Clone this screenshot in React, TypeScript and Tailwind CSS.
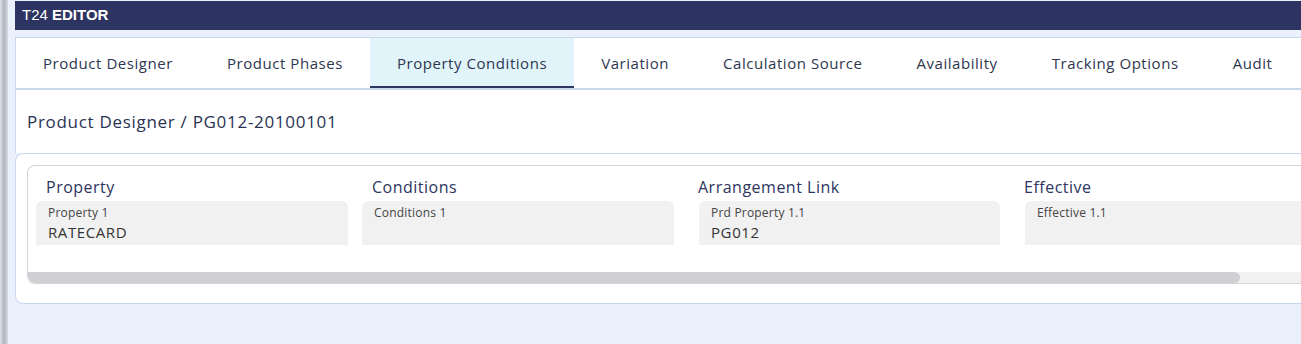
import React from 'react';

const tabs = [
  'Product Designer',
  'Product Phases',
  'Property Conditions',
  'Variation',
  'Calculation Source',
  'Availability',
  'Tracking Options',
  'Audit',
];

const columns = [
  { label: 'Property', caption: 'Property 1', value: 'RATECARD', field: 'ml-0 w-[312px]' },
  { label: 'Conditions', caption: 'Conditions 1', value: '', field: 'ml-0 w-[312px]' },
  { label: 'Arrangement Link', caption: 'Prd Property 1.1', value: 'PG012', field: 'ml-[11px] w-[301px]' },
  { label: 'Effective', caption: 'Effective 1.1', value: '', field: 'ml-[11px] w-[312px]' },
];

export default function App() {
  return (
    <div className="flex h-[344px] w-[1301px] overflow-hidden bg-[#eaf1fd] font-['Open_Sans',sans-serif]">
      <div className="w-[8px] shrink-0 bg-gradient-to-r from-[#e1e5eb] via-[#aeb4be] to-[#d6dce6]" />
      <div className="flex-1 min-w-0 pl-[7px] pt-px">
        <div className="h-[29px] bg-[#2d3461] pl-[7px] flex items-center text-[15px] text-white font-['Liberation_Sans',Arial,sans-serif]">
          <span>T24&nbsp;</span>
          <span className="font-bold">EDITOR</span>
        </div>

        <div className="mt-[7px] bg-white border border-r-0 border-b-2 border-[#c9d7ee] flex overflow-hidden">
          {tabs.map((t, i) => (
            <div
              key={t}
              className={
                'h-[50px] shrink-0 whitespace-nowrap px-[27px] pt-[2px] flex items-center text-[15px] tracking-[0.55px] text-[#2e3650] border-b-2 ' +
                (i === 2 ? 'bg-[#e0f4fa] border-[#2d3461]' : 'border-transparent')
              }
            >
              {t}
            </div>
          ))}
        </div>

        <div className="h-[63px] bg-white border-l border-[#c9d7ee] pl-[11px] flex items-center text-[17px] tracking-[0.7px] text-[#2a3352]">
          Product Designer / PG012-20100101
        </div>

        <div className="bg-white border border-r-0 border-[#c9d7ee] rounded-l-lg pl-[11px] pt-[11px] pb-[19px]">
          <div className="border border-r-0 border-[#d3d5dd] rounded-l-lg overflow-hidden">
            <div className="flex pl-[8px] pt-[11px] h-[106px]">
              {columns.map((c) => (
                <div key={c.label} className="w-[326px] shrink-0">
                  <div className="pl-[10px] text-[16px] leading-[20px] text-[#2d3561] tracking-[0.5px]">{c.label}</div>
                  <div className={'mt-[4px] h-[44px] bg-[#f1f1f1] rounded-t-md pl-3 pt-[4px] ' + c.field}>
                    <div className="text-[12px] leading-[16px] text-[#444] tracking-[0.2px]">{c.caption}</div>
                    <div className="mt-[1px] text-[15px] leading-[20px] text-[#333] tracking-[0.6px]">{c.value}</div>
                  </div>
                </div>
              ))}
            </div>
            <div className="h-[11px] bg-[#f1f1f1] flex">
              <div className="w-[1212px] h-full bg-[#d0cfd2] rounded-r-full" />
            </div>
          </div>
        </div>
      </div>
    </div>
  );
}
